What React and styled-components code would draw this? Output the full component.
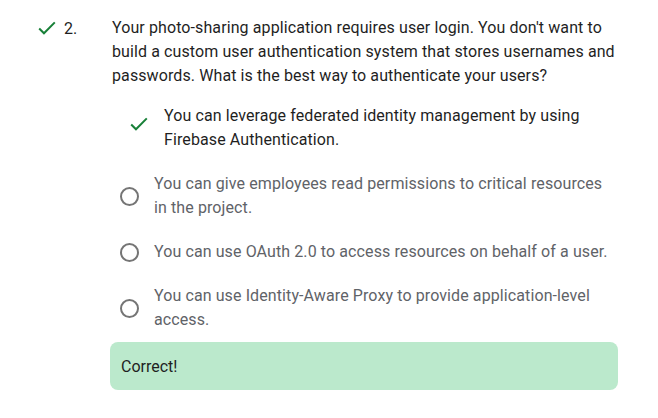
import React from 'react'
import styled, { createGlobalStyle } from 'styled-components'

const Global = createGlobalStyle`
  body {
    margin: 0;
    background: #fff;
    font-family: Roboto, "Liberation Sans", sans-serif;
  }
`

const options = [
  { text: 'You can leverage federated identity management by using Firebase Authentication.', correct: true },
  { text: 'You can give employees read permissions to critical resources in the project.' },
  { text: 'You can use OAuth 2.0 to access resources on behalf of a user.' },
  { text: 'You can use Identity-Aware Proxy to provide application-level access.' },
]

const Check = ({ size = 20 }) => (
  <svg width={size} height={size} viewBox="0 0 24 24">
    <path d="M3.5 12.5l5.2 5.2L20.5 5.9" fill="none" stroke="#188038" strokeWidth="2.2" />
  </svg>
)

const App = () => (
  <>
    <Global />
    <Question>
      <Head>
        <Check size={22} />
        <Num>2.</Num>
      </Head>
      <Body>
        <Prompt>
          Your photo-sharing application requires user login. You don't want to build a custom user
          authentication system that stores usernames and passwords. What is the best way to
          authenticate your users?
        </Prompt>
        <Options>
          {options.map((o) => (
            <Option key={o.text}>
              <Mark $correct={o.correct}>
                {o.correct ? <Check size={22} /> : <Radio />}
              </Mark>
              <OptionText $correct={o.correct}>{o.text}</OptionText>
            </Option>
          ))}
        </Options>
        <Feedback>Correct!</Feedback>
      </Body>
    </Question>
  </>
)

export default App

const Question = styled.div`
  display: flex;
  padding: 16px 0 0 36px;
  width: 582px;
`

const Head = styled.div`
  display: flex;
  align-items: center;
  gap: 6px;
  width: 76px;
  height: 24px;
  flex-shrink: 0;
`

const Num = styled.span`
  font-size: 16px;
  color: #1f1f1f;
`

const Body = styled.div`
  flex: 1;
  display: flex;
  flex-direction: column;
`

const Prompt = styled.p`
  margin: 0;
  font-size: 16px;
  line-height: 24px;
  letter-spacing: 0.1px;
  color: #1f1f1f;
`

const Options = styled.div`
  display: flex;
  flex-direction: column;
  gap: 20px;
  margin-top: 16px;
  padding-left: 8px;
  width: 492px;
`

const Option = styled.div`
  display: flex;
  align-items: center;
`

const Mark = styled.div`
  width: ${(p) => (p.$correct ? '22px' : '19px')};
  display: flex;
  justify-content: center;
  margin-left: ${(p) => (p.$correct ? '8px' : '0')};
  margin-right: ${(p) => (p.$correct ? '14px' : '15px')};
  margin-bottom: ${(p) => (p.$correct ? '8px' : '0')};
  flex-shrink: 0;
`

const Radio = styled.span`
  width: 15px;
  height: 15px;
  border: 2px solid #757575;
  border-radius: 50%;
`

const OptionText = styled.span`
  flex: 1;
  font-size: 16px;
  line-height: 24px;
  letter-spacing: 0.1px;
  color: ${(p) => (p.$correct ? '#1f1f1f' : '#5f6368')};
`

const Feedback = styled.div`
  margin: 10px 0 0 -2px;
  background: #bbe9cc;
  border-radius: 8px;
  height: 48px;
  display: flex;
  align-items: center;
  padding-left: 11px;
  font-size: 16px;
  color: #1f1f1f;
`
